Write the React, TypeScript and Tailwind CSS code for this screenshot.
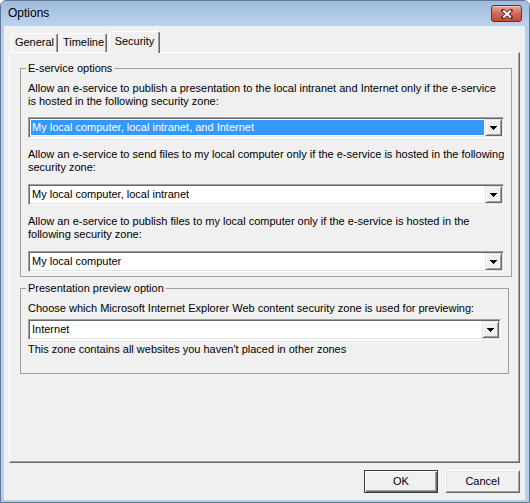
import React from 'react';

const FONT = "font-['Liberation_Sans',Arial,sans-serif]";

function ArrowButton() {
  return (
    <div className="flex w-[17px] shrink-0 items-center justify-center border border-t-[#e3e3e3] border-l-[#e3e3e3] border-r-[#696969] border-b-[#696969] bg-[#f0f0f0] shadow-[inset_1px_1px_0_#ffffff,inset_-1px_-1px_0_#a0a0a0]">
      <svg width="7" height="4" viewBox="0 0 7 4" shapeRendering="crispEdges">
        <path d="M0 0h7v1h-1v1h-1v1h-1v1h-1v-1h-1v-1h-1v-1h-1z" fill="#000" />
      </svg>
    </div>
  );
}

function Combo({ value, selected = false }: { value: string; selected?: boolean }) {
  return (
    <div className="flex h-[21px] border border-t-[#a0a0a0] border-l-[#a0a0a0] border-r-white border-b-white bg-white p-px shadow-[inset_1px_1px_0_#696969,inset_-1px_-1px_0_#e3e3e3]">
      <div
        className={
          selected
            ? 'm-px flex flex-1 items-center bg-[#3399ff] pl-px text-white'
            : 'm-px flex flex-1 items-center pl-px'
        }
      >
        {value}
      </div>
      <ArrowButton />
    </div>
  );
}

function Tab({ label, active = false, className }: { label: string; active?: boolean; className: string }) {
  if (active) {
    return (
      <div
        className={`relative z-10 -mb-px flex h-[22px] items-start justify-center rounded-t-[2px] border-t border-l border-r border-t-white border-l-white border-r-[#696969] bg-[#f0f0f0] pt-[3px] shadow-[inset_-1px_0_0_#a0a0a0] ${className}`}
      >
        {label}
      </div>
    );
  }
  return (
    <div
      className={`flex h-[19px] items-center justify-center rounded-t-[2px] border-t border-l border-r border-t-white border-l-white border-r-[#696969] bg-[#f0f0f0] pb-px shadow-[inset_-1px_0_0_#a0a0a0] ${className}`}
    >
      {label}
    </div>
  );
}

function CloseButton() {
  return (
    <div className="flex h-[17px] w-[31px] items-center justify-center rounded-[3px] border border-[#6e2a24] bg-gradient-to-b from-[#e9a99c] via-[#d2675a] to-[#c4473a] shadow-[inset_0_1px_0_#f4cfc6]">
      <svg width="12" height="10" viewBox="0 0 12 10">
        <path d="M2.2 1.6L9.8 8.4M9.8 1.6L2.2 8.4" stroke="#5b211c" strokeWidth="3.6" strokeLinecap="square" />
        <path d="M2.2 1.6L9.8 8.4M9.8 1.6L2.2 8.4" stroke="#ffffff" strokeWidth="2" />
      </svg>
    </div>
  );
}

export default function App() {
  return (
    <div className={`${FONT} text-[11px] leading-[13px] text-black`}>
      <div className="flex h-[503px] w-[530px] flex-col rounded-t-[6px] border border-[#5f7897] bg-[#b9cfe8]">
        {/* Title bar */}
        <div className="flex h-[25px] shrink-0 items-center justify-between rounded-t-[5px] bg-gradient-to-b from-[#a1bcdc] to-[#bcd3ec] pl-[7px] pr-[7px]">
          <span className="text-[12px]">Options</span>
          <CloseButton />
        </div>

        {/* Client area */}
        <div className="flex flex-1 flex-col pl-[3px] pr-[4px] pb-[2px]">
          <div className="flex flex-1 flex-col bg-[#f0f0f0] px-[5px] pt-[5px]">
            {/* Tabs */}
            <div className="flex h-[21px] items-end gap-[2px] pl-[2px]">
              <Tab label="General" className="w-[47px]" />
              <Tab label="Timeline" className="w-[47px]" />
              <Tab label="Security" active className="w-[51px]" />
            </div>

            {/* Tab panel */}
            <div className="flex h-[411px] flex-col gap-[5px] border border-t-white border-l-white border-r-[#696969] border-b-[#696969] px-[10px] pt-[9px] shadow-[inset_-1px_-1px_0_#a0a0a0]">
              <fieldset className="border border-[#a0a0a0] px-[7px] pb-[4px]">
                <legend className="-ml-[2px] px-[2px] leading-[13px]">E-service options</legend>
                <p className="mt-[7px] whitespace-nowrap">
                  Allow an e-service to publish a presentation to the local intranet and Internet only if the e-service
                  <br />
                  is hosted in the following security zone:
                </p>
                <div className="mt-[9px]">
                  <Combo value="My local computer, local intranet, and Internet" selected />
                </div>
                <p className="mt-[10px] whitespace-nowrap">
                  Allow an e-service to send files to my local computer only if the e-service is hosted in the following
                  <br />
                  security zone:
                </p>
                <div className="mt-[10px]">
                  <Combo value="My local computer, local intranet" />
                </div>
                <p className="mt-[10px] whitespace-nowrap">
                  Allow an e-service to publish files to my local computer only if the e-service is hosted in the
                  <br />
                  following security zone:
                </p>
                <div className="mt-[10px]">
                  <Combo value="My local computer" />
                </div>
              </fieldset>

              <fieldset className="border border-[#a0a0a0] px-[7px] pb-[17px]">
                <legend className="-ml-[2px] px-[2px] leading-[13px]">Presentation preview option</legend>
                <p className="mt-[7px]">
                  Choose which Microsoft Internet Explorer Web content security zone is used for previewing:
                </p>
                <div className="mt-[4px]">
                  <Combo value="Internet" />
                </div>
                <p className="mt-[3px]">This zone contains all websites you haven't placed in other zones</p>
              </fieldset>
            </div>

            {/* Buttons */}
            <div className="mt-[7px] flex justify-end gap-[7px]">
              <button className="h-[23px] w-[74px] border border-[#3c3c3c] bg-[#f0f0f0] shadow-[inset_1px_1px_0_#ffffff,inset_-1px_-1px_0_#696969,inset_-2px_-2px_0_#a0a0a0]">
                OK
              </button>
              <button className="h-[23px] w-[75px] border border-t-white border-l-white border-r-[#696969] border-b-[#696969] bg-[#f0f0f0] shadow-[inset_1px_1px_0_#e3e3e3,inset_-1px_-1px_0_#a0a0a0]">
                Cancel
              </button>
            </div>
          </div>
        </div>
      </div>
    </div>
  );
}
